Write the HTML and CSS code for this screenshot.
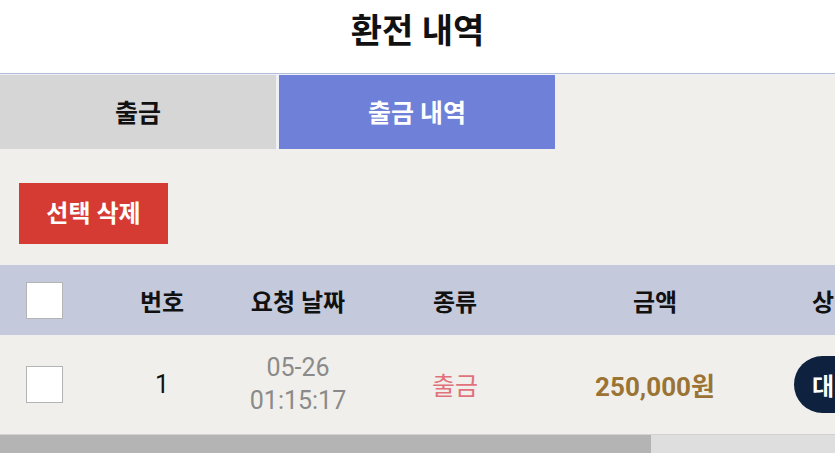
FILE: index.html
```html
<html>
<head>
    <meta charset="UTF-8">
    <meta name="viewport" content="width=device-width, initial-scale=1.0">
    <title>환전 내역</title>
    <link rel="stylesheet" href="styles.css">
</head>
<body>
    <div class="topbar">환전 내역</div>
    <div class="tabs">
        <div class="tab">출금</div>
        <div class="tab active">출금 내역</div>
    </div>
    <div class="content">
        <div class="tools">
            <a href="#" class="delbutton">선택 삭제</a>
        </div>
        <div class="tablewrap">
            <div class="trow thead">
                <div class="cell c-check"><span class="check"></span></div>
                <div class="cell c-no">번호</div>
                <div class="cell c-date">요청 날짜</div>
                <div class="cell c-type">종류</div>
                <div class="cell c-amount">금액</div>
                <div class="cell c-state">상태</div>
            </div>
            <div class="trow tbody">
                <div class="cell c-check"><span class="check"></span></div>
                <div class="cell c-no num">1</div>
                <div class="cell c-date date">05-26<br>01:15:17</div>
                <div class="cell c-type out">출금</div>
                <div class="cell c-amount money">250,000원</div>
                <div class="cell c-state"><span class="pill">대기</span></div>
            </div>
        </div>
        <div class="scrollbar">
            <div class="thumb"></div>
            <div class="track"></div>
        </div>
    </div>
</body>
</html>
```

FILE: styles.css
```css
body{
    margin: 0;
    width: 835px;
    height: 453px;
    overflow: hidden;
    background: #f1efeb;
    font-family: Roboto, "Noto Sans CJK KR", sans-serif;
    color: #111;
}
.topbar{
    height: 74px;
    box-sizing: border-box;
    background: #ffffff;
    border-bottom: 1px solid #b3bfd9;
    display: flex;
    align-items: center;
    justify-content: center;
    font-size: 34px;
    font-weight: bold;
    padding-bottom: 16px;
}
.tabs{
    display: flex;
    height: 74px;
    border-top: 1px solid #eef0f6;
}
.tab{
    width: 276px;
    display: flex;
    align-items: center;
    justify-content: center;
    background: #d6d6d6;
    font-size: 25px;
    font-weight: bold;
    border-right: 3px solid #eef0f4;
    padding-bottom: 3px;
}
.tab.active{
    width: 276px;
    background: #6e80d7;
    color: #ffffff;
    border-right: none;
}
.tools{
    padding: 34px 19px 21px;
}
.delbutton{
    display: inline-flex;
    align-items: center;
    justify-content: center;
    width: 149px;
    height: 61px;
    padding-bottom: 4px;
    box-sizing: border-box;
    background: #d63b33;
    color: #ffffff;
    font-size: 24px;
    font-weight: bold;
    text-decoration: none;
}
.tablewrap{
    width: 835px;
    overflow: hidden;
}
.trow{
    display: flex;
    width: 960px;
    align-items: center;
}
.thead{
    height: 70px;
    background: #c4c9dc;
    font-size: 24px;
    font-weight: bold;
}
.tbody{
    height: 98px;
    font-size: 25px;
}
.cell{
    text-align: center;
    flex: none;
}
.c-check{ width: 89px; display: flex; justify-content: center; }
.c-no{ width: 146px; }
.c-date{ width: 126px; }
.c-type{ width: 188px; }
.c-amount{ width: 212px; }
.c-state{ width: 146px; display: flex; justify-content: center; }
.check{
    display: block;
    width: 35px;
    height: 35px;
    background: #ffffff;
    border: 1px solid #b4b4b4;
}
.num{ font-size: 25px; }
.date{
    color: #8a8a8a;
    font-size: 25px;
    line-height: 33px;
}
.out{ color: #e1727c; }
.money{
    color: #9a7435;
    font-weight: bold;
    font-size: 26px;
}
.pill{
    display: inline-flex;
    align-items: center;
    height: 57px;
    padding: 0 18px;
    border-radius: 29px;
    background: #0e2240;
    color: #ffffff;
    font-weight: bold;
    font-size: 24px;
}
.scrollbar{
    display: flex;
    height: 20px;
    margin-top: 1px;
    border-top: 1px solid #d3d1cd;
}
.thumb{
    width: 651px;
    background: #b4b4b4;
}
.track{
    flex: 1;
    background: #dedede;
}
```
